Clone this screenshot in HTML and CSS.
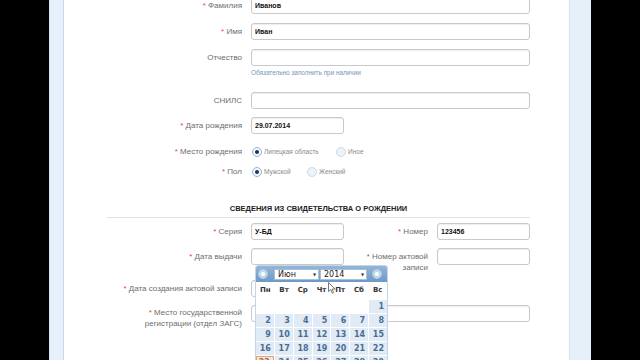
FILE: index.html
```html
<!DOCTYPE html>
<html lang="ru">
<head>
    <meta charset="UTF-8">
    <title>Сведения о ребенке</title>
    <link rel="stylesheet" href="styles.css">
</head>
<body>
    <div class="screen">
        <div class="frame">
            <div class="page">
                <div class="form">
                    <div class="row">
                        <div class="label"><span class="req">*</span> Фамилия</div>
                        <div class="field"><input class="input wide" type="text" value="Иванов"></div>
                    </div>
                    <div class="row">
                        <div class="label"><span class="req">*</span> Имя</div>
                        <div class="field"><input class="input wide" type="text" value="Иван"></div>
                    </div>
                    <div class="row row-hint">
                        <div class="label">Отчество</div>
                        <div class="field">
                            <input class="input wide" type="text" value="">
                            <div class="hint">Обязательно заполнить при наличии</div>
                        </div>
                    </div>
                    <div class="row row-tight">
                        <div class="label">СНИЛС</div>
                        <div class="field"><input class="input wide" type="text" value=""></div>
                    </div>
                    <div class="row">
                        <div class="label"><span class="req">*</span> Дата рождения</div>
                        <div class="field"><input class="input short" type="text" value="29.07.2014"></div>
                    </div>
                    <div class="row row-radio">
                        <div class="label"><span class="req">*</span> Место рождения</div>
                        <div class="field radios">
                            <span class="option opt-place"><span class="radio checked"></span>Липецкая область</span>
                            <span class="option"><span class="radio"></span>Иное</span>
                        </div>
                    </div>
                    <div class="row row-radio row-last">
                        <div class="label"><span class="req">*</span> Пол</div>
                        <div class="field radios">
                            <span class="option opt-sex"><span class="radio checked"></span>Мужской</span>
                            <span class="option"><span class="radio"></span>Женский</span>
                        </div>
                    </div>

                    <h2 class="section-title">СВЕДЕНИЯ ИЗ СВИДЕТЕЛЬСТВА О РОЖДЕНИИ</h2>

                    <div class="row row-tight">
                        <div class="label"><span class="req">*</span> Серия</div>
                        <div class="field"><input class="input short" type="text" value="У-БД"></div>
                        <div class="label label-right"><span class="req">*</span> Номер</div>
                        <div class="field"><input class="input short" type="text" value="123456"></div>
                    </div>
                    <div class="row row-issue">
                        <div class="label"><span class="req">*</span> Дата выдачи</div>
                        <div class="field"><input class="input short" type="text" value=""></div>
                        <div class="label label-right multi"><span class="req">*</span> Номер актовой<br>записи</div>
                        <div class="field"><input class="input short" type="text" value=""></div>
                    </div>
                    <div class="row row-tight">
                        <div class="label"><span class="req">*</span> Дата создания актовой записи</div>
                        <div class="field"><input class="input short" type="text" value=""></div>
                    </div>
                    <div class="row">
                        <div class="label multi multi-low"><span class="req">*</span> Место государственной<br>регистрации (отдел ЗАГС)</div>
                        <div class="field"><input class="input wide" type="text" value=""></div>
                    </div>
                </div>

                <!-- datepicker opened over "Дата выдачи" -->
                <div class="cal">
                    <div class="cal-head">
                        <span class="cal-btn"></span>
                        <span class="cal-select cal-month">Июн<span class="caret">▼</span></span>
                        <span class="cal-select cal-year">2014<span class="caret">▼</span></span>
                        <span class="cal-btn cal-next"></span>
                    </div>
                    <div class="cal-dow">
                        <span>Пн</span><span>Вт</span><span>Ср</span><span>Чт</span><span>Пт</span><span>Сб</span><span>Вс</span>
                    </div>
                    <div class="cal-days">
                        <span class="empty"></span><span class="empty"></span><span class="empty"></span><span class="empty"></span><span class="empty"></span><span class="empty"></span><span>1</span>
                        <span>2</span><span>3</span><span>4</span><span>5</span><span>6</span><span>7</span><span>8</span>
                        <span>9</span><span>10</span><span>11</span><span>12</span><span>13</span><span>14</span><span>15</span>
                        <span>16</span><span>17</span><span>18</span><span>19</span><span>20</span><span>21</span><span>22</span>
                        <span class="today">23</span><span>24</span><span>25</span><span>26</span><span>27</span><span>28</span><span>29</span>
                    </div>
                </div>

                <svg class="cursor" width="8" height="12" viewBox="0 0 8 12">
                    <path d="M0.5 0.5 L0.5 9.5 L2.7 7.6 L4.3 11.2 L5.6 10.6 L4.1 7.1 L7 7.1 Z" fill="#fff" stroke="#555" stroke-width="0.8"/>
                </svg>
            </div>
        </div>
    </div>
</body>
</html>
```

FILE: styles.css
```css
body {
    margin: 0;
    background-color: #000;
    font-family: "Liberation Sans", Arial, sans-serif;
}

.screen {
    width: 640px;
    height: 360px;
    overflow: hidden;
}

.frame {
    margin-left: 49px;
    width: 542px;
    height: 360px;
    box-sizing: border-box;
    padding: 0 21px 0 13px;
    background-color: #e6f0fb;
    border-left: 1px solid #d4e1ef;
}

.page {
    position: relative;
    height: 360px;
    overflow: hidden;
    background-color: #fff;
    border-left: 1px solid #c9d9ea;
    border-right: 1px solid #d3e1f0;
}

.form {
    margin-top: -3px;
}

.row {
    display: flex;
    align-items: flex-start;
    margin-bottom: 9px;
}

.row-tight {
    margin-bottom: 8px;
}

.row-hint {
    margin-bottom: 13px;
}

.row-issue {
    margin-bottom: 7px;
}

.label {
    width: 178px;
    flex: none;
    text-align: right;
    font-size: 8px;
    line-height: 17px;
    color: #6d6d6d;
}

.label.multi {
    line-height: 11px;
    padding-top: 3px;
}

.label.multi-low {
    padding-top: 2px;
}

.label-right {
    width: 84px;
}

.req {
    color: #e04848;
}

.field {
    margin-left: 9px;
}

.input {
    display: block;
    box-sizing: border-box;
    height: 17px;
    margin: 0;
    padding: 0 3px;
    border: 1px solid #c9c9c9;
    border-radius: 3px;
    box-shadow: inset 0 1px 1px rgba(0, 0, 0, 0.07);
    background-color: #fff;
    font-family: "Liberation Sans", Arial, sans-serif;
    font-size: 7px;
    font-weight: bold;
    color: #111;
}

.wide {
    width: 279px;
}

.short {
    width: 93px;
}

.hint {
    font-size: 6.4px;
    line-height: 13px;
    color: #7197bb;
}

/* radio groups */
.row-radio {
    margin-bottom: 3px;
}

.row-last {
    margin-bottom: 0;
}

.radios {
    display: flex;
    align-items: center;
    height: 17px;
}

.option {
    display: flex;
    align-items: center;
    font-size: 6.5px;
    color: #8a8a8a;
}

.opt-place {
    width: 85px;
}

.opt-sex {
    width: 56px;
}

.radio {
    position: relative;
    width: 10px;
    height: 10px;
    box-sizing: border-box;
    margin-right: 2px;
    border: 1px solid #ccd8e4;
    border-radius: 50%;
    background-color: #edf3f9;
}

.radio.checked {
    margin-left: 1px;
    border-color: #9db2c8;
    background-color: #f3f7fb;
}

.radio.checked::after {
    content: "";
    position: absolute;
    left: 2px;
    top: 2px;
    width: 4px;
    height: 4px;
    border-radius: 50%;
    background-color: #1c3563;
}

.section-title {
    width: 423px;
    margin: 23px 0 5px 43px;
    padding-bottom: 2px;
    border-bottom: 1px solid #e2e2e2;
    text-align: center;
    font-size: 7.5px;
    line-height: 12px;
    font-weight: bold;
    color: #222;
}

/* datepicker */
.cal {
    position: absolute;
    left: 191px;
    top: 265px;
    width: 133px;
    box-sizing: border-box;
    background-color: #fff;
    border: 1px solid #c4d5e6;
    border-radius: 3px;
    font-family: "DejaVu Sans", Verdana, sans-serif;
}

.cal-head {
    display: flex;
    align-items: center;
    height: 16px;
    padding-left: 2px;
    background: linear-gradient(#93b6da, #6c99c6);
    border-radius: 2px 2px 0 0;
}

.cal-btn {
    width: 10px;
    height: 10px;
    box-sizing: border-box;
    border-radius: 50%;
    border: 1px solid #b6cde5;
    background: radial-gradient(circle, #fff 0, #fff 1.5px, #c3d7ec 2.5px);
}

.cal-next {
    margin-left: 5px;
}

.cal-select {
    position: relative;
    display: block;
    height: 11px;
    box-sizing: border-box;
    padding-left: 3px;
    background-color: #fff;
    border: 1px solid #a8bfd6;
    font-size: 8px;
    line-height: 9px;
    color: #222;
}

.cal-month {
    width: 45px;
    margin-left: 6px;
}

.cal-year {
    width: 47px;
    margin-left: 1px;
}

.caret {
    position: absolute;
    right: 2px;
    top: 0;
    font-size: 4px;
    line-height: 9px;
    color: #333;
}

.cal-dow {
    display: grid;
    grid-template-columns: repeat(7, 1fr);
    height: 16px;
    align-items: center;
    text-align: center;
    font-size: 7px;
    font-weight: bold;
    color: #333;
}

.cal-days {
    display: grid;
    grid-template-columns: repeat(7, 1fr);
    grid-auto-rows: 13px;
    gap: 1px;
    margin-top: 2px;
}

.cal-days span {
    padding-right: 3px;
    text-align: right;
    background-color: #e1ebf6;
    font-size: 8px;
    line-height: 13px;
    font-weight: bold;
    color: #4b6d92;
}

.cal-days .empty {
    background-color: #fff;
}

.cal-days .today {
    box-sizing: border-box;
    border: 1px solid #eba062;
    line-height: 11px;
    color: #c8602a;
}

.cursor {
    position: absolute;
    left: 264px;
    top: 282px;
}
```
